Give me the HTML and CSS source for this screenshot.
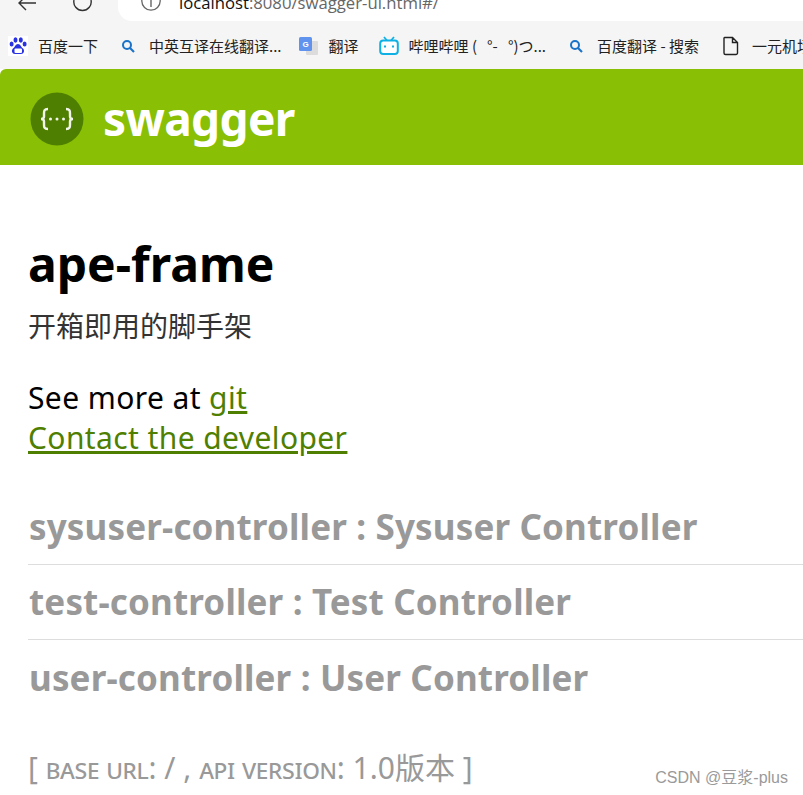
FILE: index.html
```html
<!DOCTYPE html>
<html lang="zh">
<head>
<meta charset="utf-8">
<title>Swagger UI</title>
<link rel="stylesheet" href="styles.css">
</head>
<body>
<div class="chrome">
  <div class="toolbar">
    <svg class="nav-icon back" width="24" height="14" viewBox="0 0 24 14"><path d="M20 3H3M10 -4L3 3l7 7" fill="none" stroke="#333" stroke-width="1.4"/></svg>
    <svg class="nav-icon reload" width="24" height="14" viewBox="0 0 24 14"><path d="M20 0a8.7 8.7 0 1 1-17 0" fill="none" stroke="#333" stroke-width="1.4"/></svg>
    <div class="address">
      <svg class="info" width="22" height="14" viewBox="0 0 22 14"><circle cx="11" cy="1" r="9.2" fill="none" stroke="#666" stroke-width="1.3"/><path d="M11 0v7" stroke="#666" stroke-width="1.4"/></svg>
      <span class="url"><span class="host">localhost</span>:8080/swagger-ui.html#/</span>
    </div>
  </div>
  <div class="bookmarks">
    <div class="bm bm-baidu">
      <svg width="20" height="20" viewBox="0 0 20 20"><rect width="20" height="20" fill="#fff"/><g fill="#2932e1"><ellipse cx="3.6" cy="8" rx="2" ry="2.6"/><ellipse cx="7.5" cy="4" rx="2" ry="2.7"/><ellipse cx="12.8" cy="4" rx="2" ry="2.7"/><ellipse cx="16.6" cy="8" rx="2" ry="2.6"/><path d="M10 8c-2.500 0-3 3-5 4.500C3 14.500 4 18 7 18h6c3 0 4-3.500 2-5.500C13 11 12.500 8 10 8z"/></g><rect x="6.500" y="12.500" width="7.500" height="4.500" rx="1" fill="#fff"/></svg>
      <span>百度一下</span>
    </div>
    <div class="bm bm-en">
      <svg width="14" height="14" viewBox="0 0 14 14"><circle cx="6" cy="6" r="4" fill="none" stroke="#1a73c8" stroke-width="2"/><path d="M9 9l4 4" stroke="#1a73c8" stroke-width="2.200"/></svg>
      <span>中英互译在线翻译...</span>
    </div>
    <div class="bm bm-tr">
      <svg width="20" height="20" viewBox="0 0 20 20"><rect x="7" y="5" width="12" height="14" rx="1" fill="#dcdcdc"/><rect x="0" y="1" width="13" height="14" rx="1.500" fill="#5f93ee"/><text x="3.500" y="11" class="gl">G</text></svg>
      <span>翻译</span>
    </div>
    <div class="bm bm-bili">
      <svg width="20" height="20" viewBox="0 0 20 20"><rect x="1.200" y="4.500" width="17.600" height="13.500" rx="3" fill="#fff" stroke="#0fb1e5" stroke-width="2"/><path d="M5 1l3 3.500M15 1l-3 3.500" stroke="#0fb1e5" stroke-width="1.800"/><path d="M6 9.500v2M14 9.500v2" stroke="#0fb1e5" stroke-width="2"/></svg>
      <span>哔哩哔哩 (&nbsp;&nbsp;&nbsp;°-&nbsp;&nbsp;&nbsp;°)つ...</span>
    </div>
    <div class="bm bm-fy">
      <svg width="14" height="14" viewBox="0 0 14 14"><circle cx="6" cy="6" r="4" fill="none" stroke="#1a73c8" stroke-width="2"/><path d="M9 9l4 4" stroke="#1a73c8" stroke-width="2.200"/></svg>
      <span>百度翻译 - 搜索</span>
    </div>
    <div class="bm bm-doc">
      <svg width="18" height="20" viewBox="0 0 18 20"><path d="M2.500 1.500h8l5 5v10.500a1.500 1.500 0 0 1-1.500 1.500H3.500A1.500 1.500 0 0 1 2 17V2a.5.5 0 0 1 .5-.5zM10.500 1.500v5h5" fill="none" stroke="#222" stroke-width="1.400"/></svg>
      <span>一元机场</span>
    </div>
  </div>
</div>
<header class="topbar">
  <svg class="logo" width="54" height="54" viewBox="0 0 54 54"><circle cx="27" cy="27" r="26.500" fill="#4f7f00"/><g fill="none" stroke="#f2f5ea" stroke-width="2.400"><path d="M18 17c-4 0-4 2-4 4.500v3c0 1.500-1 2.500-3 2.500 2 0 3 1 3 2.500v3c0 2.500 0 4.500 4 4.500"/><path d="M36 17c4 0 4 2 4 4.500v3c0 1.500 1 2.500 3 2.500-2 0-3 1-3 2.500v3c0 2.500 0 4.500-4 4.500"/></g><g fill="#f2f5ea"><circle cx="20.500" cy="27" r="1.500"/><circle cx="27" cy="27" r="1.500"/><circle cx="33.500" cy="27" r="1.500"/></g></svg>
  <span class="brand">swagger</span>
</header>
<main class="content">
  <h1 class="title">ape-frame</h1>
  <p class="desc">开箱即用的脚手架</p>
  <div class="links">
    <div>See more at <a href="#">git</a></div>
    <div><a href="#">Contact the developer</a></div>
  </div>
  <section class="tags">
    <h2 class="tag">sysuser-controller : Sysuser Controller</h2>
    <h2 class="tag">test-controller : Test Controller</h2>
    <h2 class="tag">user-controller : User Controller</h2>
  </section>
  <p class="base">[ <span class="sc">Base url</span>: / , <span class="sc">Api version</span>: 1.0版本 ]</p>
</main>
<div class="watermark">CSDN @豆浆-plus</div>
</body>
</html>
```

FILE: styles.css
```css
* { box-sizing: border-box; }
html, body { margin: 0; padding: 0; height: 795px; overflow: hidden; background: #fff; }
body { font-family: "Noto Sans", "Noto Sans CJK SC", sans-serif; position: relative; }

.chrome { background: #f5f5f5; height: 69px; }
.toolbar { height: 21px; display: flex; align-items: flex-start; background: #f5f5f5; }
.nav-icon { flex: none; }
.back { margin-left: 16px; }
.reload { margin-left: 31px; }
.address {
  margin-left: 23px; flex: 1; height: 21px; background: #fff;
  border-bottom-left-radius: 14px;
  display: flex; align-items: flex-start; overflow: hidden;
}
.info { margin-left: 22px; flex: none; }
.url { margin-left: 17px; font-size: 16.700px; line-height: 16px; margin-top: -5px; color: #666; white-space: nowrap; font-family: "Open Sans", sans-serif; }
.host { color: #111; }

.bookmarks { height: 48px; display: flex; align-items: center; font-size: 15px; color: #222; white-space: nowrap; overflow: hidden; font-family: "Noto Sans CJK SC", sans-serif; padding-top: 1px; }
.bm { display: flex; align-items: center; flex: none; }
.bm-baidu { margin-left: 8px; gap: 10px; }
.bm-en { margin-left: 23px; gap: 14px; }
.bm-tr { margin-left: 17px; gap: 10px; }
.bm-bili { margin-left: 20px; gap: 10px; }
.bm-fy { margin-left: 23px; gap: 14px; }
.bm-doc { margin-left: 23px; gap: 12px; }
.gl { font: 700 8px "Liberation Sans", sans-serif; fill: #fff; }

.topbar {
  height: 96px; background: #89bf04; display: flex; align-items: center;
  padding: 4px 0 0 30px; gap: 19px; border-radius: 6px 0 0 0; color: #fff;
}
.logo { flex: none; }
.brand { font-size: 46px; font-weight: 700; line-height: 1; letter-spacing: -.65px; margin-top: -2px; }

.content { padding: 69px 0 0 28px; }
.title { margin: 0; font-size: 48px; line-height: 60px; font-weight: 700; color: #000; }
.desc { margin: 10px 0 0; font-size: 28px; line-height: 42px; color: #333; font-family: "Noto Sans CJK SC", sans-serif; font-weight: 400; }
.links { margin-top: 32px; font-size: 30px; line-height: 40px; color: #000; letter-spacing: .4px; }
.links a { color: #4f7f00; text-decoration: underline; }

.tags { margin-top: 32px; }
.tag {
  margin: 0; height: 75px; padding: 14px 0 0 1px; font-size: 35px; line-height: 46px; font-weight: 700;
  color: #999; border-bottom: 1px solid #ddd; letter-spacing: .15px; white-space: nowrap;
}
.tag:last-child { border-bottom: 0; padding-top: 15px; }
.base { margin: 32px 0 0 0; font-size: 30px; line-height: 42px; color: #999; white-space: nowrap; }
.sc { font-variant: small-caps; text-transform: lowercase; font-size: 28px; letter-spacing: -.3px; }

.watermark { position: absolute; right: 15px; top: 768px; font-size: 16px; line-height: 20px; color: #9a9a9a; font-family: "Liberation Sans", "Noto Sans CJK SC", sans-serif; }
```
